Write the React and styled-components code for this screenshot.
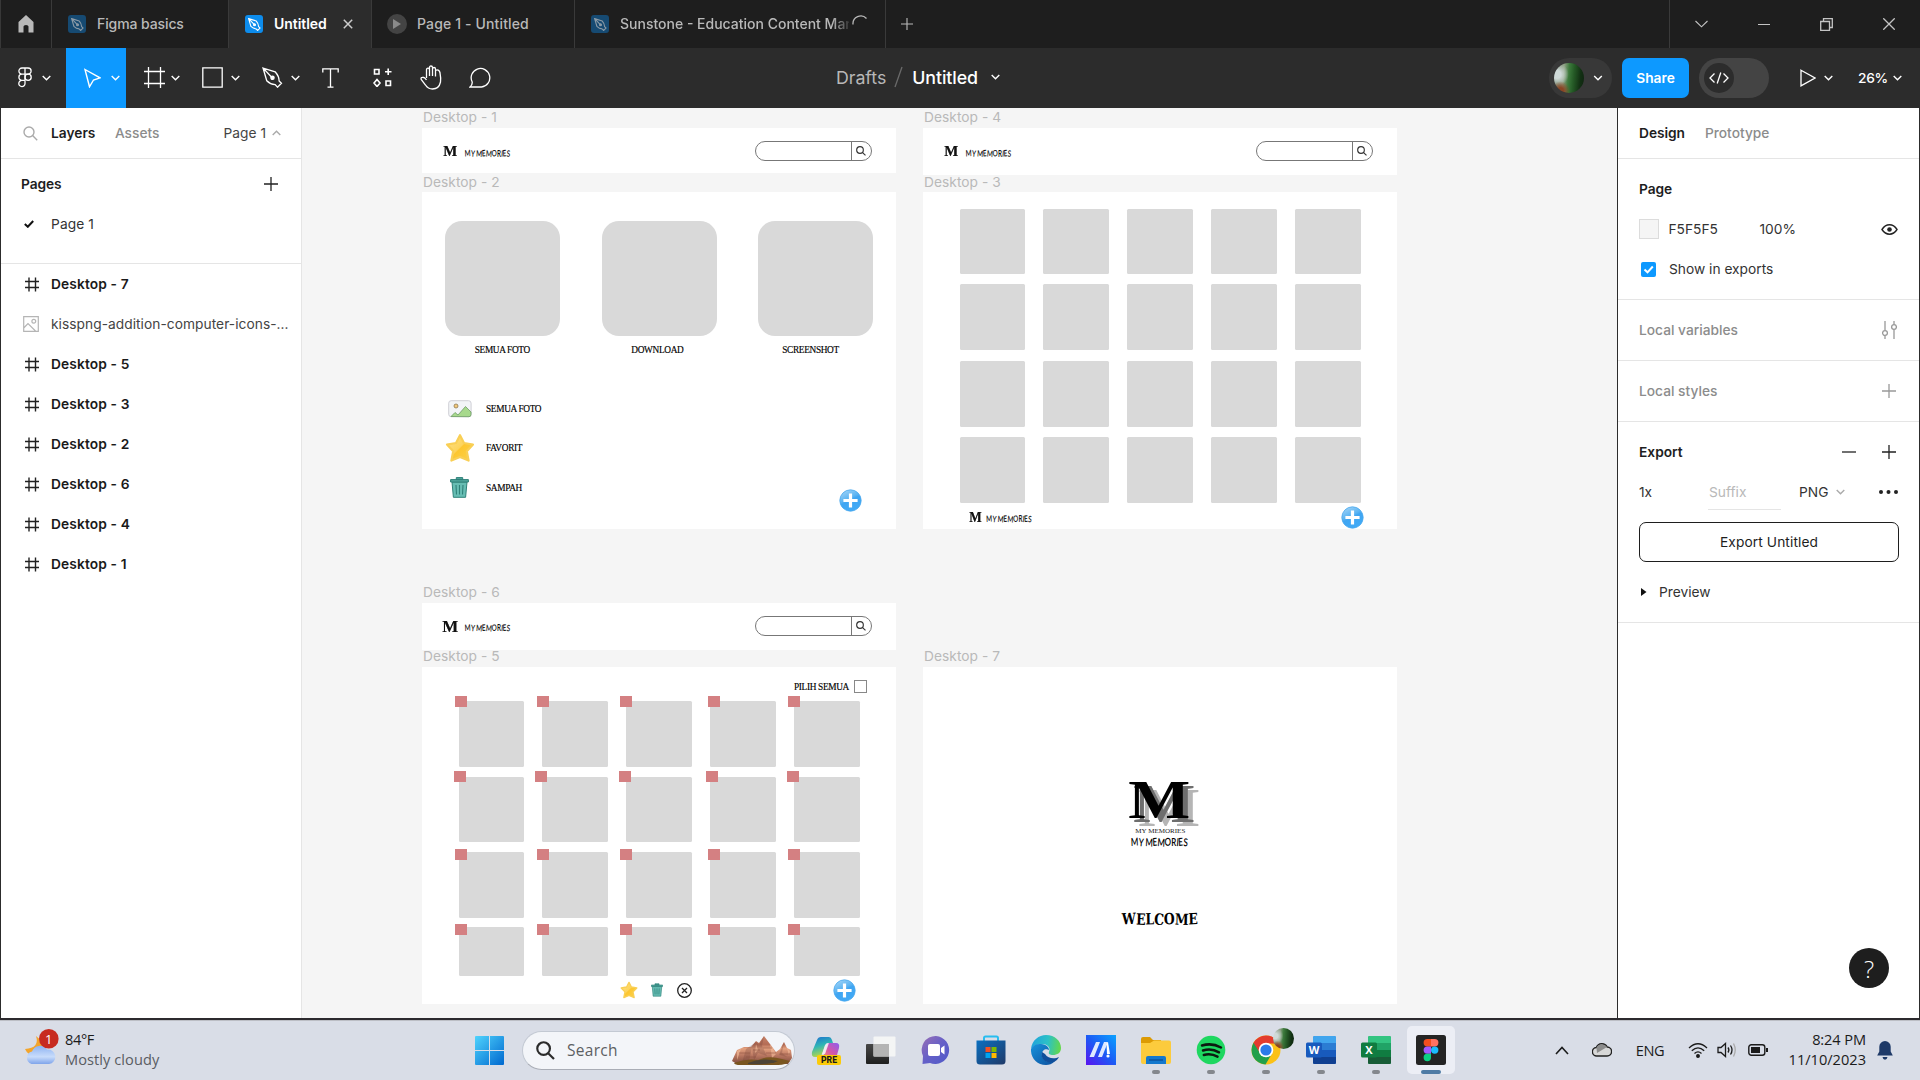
import React from "react";
import styled, { createGlobalStyle, css } from "styled-components";

const UI = `Inter, "Liberation Sans", sans-serif`;
const SERIF = `"Liberation Serif", serif`;
const SEGOE = `"Open Sans", "Noto Sans", sans-serif`;

const Global = createGlobalStyle`
  * { box-sizing: border-box; }
  html, body { margin: 0; padding: 0; overflow: hidden; }
  svg { display: block; flex: none; }
`;

const Screen = styled.div`
  width: 1920px;
  height: 1080px;
  display: flex;
  flex-direction: column;
  overflow: hidden;
  background: #f5f5f5;
  font-family: ${UI};
  font-size: 13.75px;
  color: #1e1e1e;
  white-space: nowrap;
`;

/* ---------- title bar ---------- */
const TitleBar = styled.header`
  display: flex;
  height: 48px;
  background: #1e1e1e;
  border-left: 1px solid #383838;
`;
const HomeTab = styled.div`
  width: 51px;
  display: flex;
  align-items: center;
  padding-left: 17px;
  border-right: 1px solid #3a3a3a;
`;
const Tab = styled.div`
  width: ${(p) => p.$w}px;
  display: flex;
  align-items: center;
  padding-left: 16px;
  gap: 11px;
  border-right: 1px solid #3a3a3a;
  background: ${(p) => (p.$active ? "#2c2c2c" : "transparent")};
  color: ${(p) => (p.$active ? "#fff" : "#b9b9b9")};
  font-weight: ${(p) => (p.$active ? 600 : 500)};
  font-size: 14px;
  letter-spacing: ${(p) => p.$ls || 0}px;
`;
const TabIcon = styled.div`
  width: 18px;
  height: 18px;
  border-radius: 3px;
  display: flex;
  align-items: center;
  justify-content: center;
  background: ${(p) => (p.$dim ? "#164a72" : "#0d8cec")};
  color: ${(p) => (p.$dim ? "#8b9aa6" : "#fff")};
`;
const PlayDot = styled.div`
  width: 20px;
  height: 20px;
  margin-left: -1px;
  margin-right: -1px;
  border-radius: 50%;
  background: #444;
  display: flex;
  align-items: center;
  justify-content: center;
`;
const TabText = styled.span`
  width: ${(p) => (p.$w ? p.$w + "px" : "auto")};
  padding-bottom: 2px;
  ${(p) =>
    p.$fade &&
    css`
      mask-image: linear-gradient(90deg, #000 212px, transparent 233px);
      margin-right: -8px;
    `}
`;
const NewTab = styled.div`
  width: 42px;
  display: flex;
  align-items: center;
  justify-content: center;
`;
const WindowControls = styled.div`
  margin-left: auto;
  width: 251px;
  border-left: 1px solid #3a3a3a;
  display: grid;
  grid-template-columns: 63px 62px 63px 62px;
  place-items: center;
`;

/* ---------- toolbar ---------- */
const Toolbar = styled.div`
  display: flex;
  height: 60px;
  background: #2c2c2c;
  color: #fff;
`;
const Tools = styled.div`
  display: flex;
  align-items: stretch;
  width: 836px;
`;
const Tool = styled.div`
  width: ${(p) => p.$w}px;
  display: flex;
  align-items: center;
  padding-bottom: 1px;
  padding-left: ${(p) => p.$pl || 0}px;
  gap: ${(p) => p.$gap || 0}px;
  background: ${(p) => (p.$on ? "#0d99ff" : "transparent")};
`;
const Crumbs = styled.div`
  display: flex;
  align-items: center;
  font-size: 17.8px;
  padding-bottom: 2px;
`;
const CrumbDim = styled.span`
  color: #b8b8b8;
  letter-spacing: -0.05px;
`;
const Crumb = styled.span`
  font-weight: 500;
  letter-spacing: -0.08px;
  margin-right: 13px;
`;
const ToolbarRight = styled.div`
  margin-left: auto;
  display: flex;
  align-items: center;
  padding-right: 18px;
`;
const AvatarPill = styled.div`
  width: 63px;
  height: 40px;
  border-radius: 20px;
  background: #383838;
  display: flex;
  align-items: center;
  padding-left: 5px;
  gap: 9px;
  margin-right: 10px;
`;
const Avatar = styled.div`
  width: ${(p) => p.$s || 30}px;
  height: ${(p) => p.$s || 30}px;
  border-radius: 50%;
  background: radial-gradient(circle at 22% 92%, #8a4524 0 8%, transparent 26%),
    radial-gradient(circle at 10% 38%, #cfdad8 0 12%, transparent 36%),
    linear-gradient(95deg, #6d7f6c 0%, #8ea184 32%, #3c7a3c 48%, #255a26 64%, #123013 85%, #0f2410 100%);
`;
const ShareButton = styled.button`
  width: 67px;
  height: 40px;
  border: 0;
  border-radius: 7px;
  background: #0d99ff;
  color: #fff;
  font: 600 13.75px ${UI};
  padding: 0;
  margin-right: 10px;
`;
const DevToggle = styled.div`
  width: 70px;
  height: 40px;
  border-radius: 20px;
  background: #444;
  padding: 5px;
  margin-right: 31px;
`;
const DevKnob = styled.div`
  width: 30px;
  height: 30px;
  border-radius: 50%;
  background: #2c2c2c;
  display: flex;
  align-items: center;
  justify-content: center;
`;
const PlayIcon = styled.div`
  margin-right: 8px;
`;
const Zoom = styled.span`
  width: 29px;
  font-size: 13.75px;
  font-weight: 500;
  margin: 0 6px 0 25px;
  letter-spacing: -0.3px;
`;

/* ---------- work area ---------- */
const Work = styled.main`
  display: flex;
  height: 912px;
  border-left: 1px solid #2c2c2c;
  border-right: 1px solid #2c2c2c;
  border-bottom: 2px solid #2c2a2e;
`;
const LeftPanel = styled.aside`
  width: 301px;
  background: #fff;
  border-right: 1px solid #e5e5e5;
`;
const PanelTabs = styled.div`
  height: 51px;
  display: flex;
  align-items: center;
  border-bottom: 1px solid #e5e5e5;
  padding: 0 20px 0 22px;
`;
const Strong = styled.span`
  font-weight: 600;
  letter-spacing: ${(p) => p.$ls || 0}px;
  margin-left: ${(p) => p.$ml || 0}px;
`;
const Muted = styled.span`
  color: #8c8c8c;
  font-weight: ${(p) => p.$weight || 400};
  letter-spacing: ${(p) => p.$ls || 0}px;
  margin-left: ${(p) => p.$ml || 0}px;
`;
const PageSwitch = styled.div`
  margin-left: auto;
  display: flex;
  align-items: center;
  gap: 6px;
  color: #444;
`;
const PagesBlock = styled.section`
  height: 105px;
  padding: 5px 20px 0 20px;
  border-bottom: 1px solid #e5e5e5;
`;
const PagesHead = styled.div`
  height: 40px;
  display: flex;
  align-items: center;
  justify-content: space-between;
`;
const Row = styled.div`
  height: 40px;
  display: grid;
  grid-template-columns: 30px 1fr;
  align-items: center;
`;
const CheckSlot = styled.div`
  padding-left: 3px;
`;
const LayerRow = styled(Row)`
  padding-left: 20px;
  font-weight: ${(p) => (p.$light ? 400 : 600)};
  color: ${(p) => (p.$light ? "#444" : "#1a1a1a")};
  letter-spacing: ${(p) => (p.$light ? 0.04 : 0.12)}px;
`;

const Canvas = styled.section`
  position: relative;
  flex: 1;
  background: #f5f5f5;
  overflow: hidden;
`;

const RightPanel = styled.aside`
  width: 302px;
  background: #fff;
  border-left: 1px solid #2c2c2c;
  position: relative;
`;
const DesignTabs = styled(PanelTabs)`
  padding: 0 20px 0 21px;
  gap: 20px;
`;
const Section = styled.section`
  height: ${(p) => p.$h}px;
  border-bottom: 1px solid #e5e5e5;
  padding: ${(p) => p.$pt || 0}px 20px 0 21px;
`;
const Line = styled.div`
  height: ${(p) => p.$h || 40}px;
  display: flex;
  align-items: center;
`;
const Push = styled.div`
  margin-left: auto;
  display: flex;
  align-items: center;
  gap: ${(p) => p.$gap || 0}px;
  margin-right: ${(p) => p.$mr || 0}px;
`;
const Swatch = styled.div`
  width: 20px;
  height: 20px;
  background: #f5f5f5;
  border: 1px solid #dcdcdc;
  margin-right: 9.5px;
`;
const Value = styled.span`
  color: #333;
  width: ${(p) => (p.$w ? p.$w + "px" : "auto")};
  letter-spacing: ${(p) => p.$ls || 0}px;
`;
const Check = styled.div`
  width: 15px;
  height: 15px;
  border-radius: 2px;
  background: #0d99ff;
  margin: 0 13px 0 2px;
`;
const Suffix = styled.div`
  width: 73px;
  height: 35px;
  line-height: 34px;
  border-bottom: 1px solid #e5e5e5;
  color: #b9b9b9;
  padding-left: 1px;
  margin-right: 18px;
`;
const ExportButton = styled.button`
  display: block;
  width: 260px;
  height: 40px;
  margin-top: 10px;
  border: 1px solid #1e1e1e;
  border-radius: 7px;
  background: #fff;
  color: #1e1e1e;
  font: 400 13.75px ${UI};
  letter-spacing: 0.1px;
`;
const Help = styled.div`
  position: absolute;
  right: 30px;
  bottom: 30px;
  width: 40px;
  height: 40px;
  border-radius: 50%;
  background: #1e1e1e;
  color: #fff;
  display: flex;
  align-items: center;
  justify-content: center;
  font: 300 24px "Open Sans", sans-serif;
`;

/* ---------- canvas frames ---------- */
const FrameNode = styled.div`
  position: absolute;
  left: ${(p) => p.$x - 302}px;
  top: ${(p) => p.$y - 108}px;
  width: 474px;
  height: ${(p) => p.$h}px;
  background: #fff;
`;
const FrameLabel = styled.div`
  position: absolute;
  left: 1px;
  top: ${(p) => p.$top || -21}px;
  line-height: 20px;
  font-size: 13.75px;
  letter-spacing: 0.04px;
  color: #b9b9b9;
`;
const HeaderBar = styled.div`
  display: flex;
  align-items: flex-start;
  justify-content: space-between;
  padding: 13px 23.6px 0 20px;
`;
const SearchPill = styled.div`
  width: 117px;
  height: 20px;
  border: 1px solid #777;
  border-radius: 10px;
  display: flex;
  justify-content: flex-end;
`;
const SearchCell = styled.div`
  width: 20px;
  border-left: 1px solid #777;
  display: flex;
  align-items: center;
  padding-left: 4px;
`;
const Albums = styled.div`
  display: grid;
  grid-template-columns: repeat(3, 115.2px);
  column-gap: 41.4px;
  padding: 29px 0 0 23px;
`;
const Album = styled.div`
  display: flex;
  flex-direction: column;
`;
const AlbumBox = styled.div`
  height: 115px;
  border-radius: 17px;
  background: #d9d9d9;
`;
const Caption = styled.span`
  font: 500 9.3px/12px ${SERIF};
  letter-spacing: -0.32px;
  color: #000;
  -webkit-text-stroke: 0.15px #000;
`;
const AlbumCaption = styled(Caption)`
  margin: 8px 0 0 ${(p) => p.$ml}px;
`;
const MenuList = styled.div`
  margin: 34.5px 0 0 22.6px;
  display: grid;
  grid-template-rows: 37px 40px 40px;
`;
const MenuItem = styled.div`
  display: grid;
  grid-template-columns: 41.4px auto;
  align-items: center;
`;
const IconSlot = styled.div`
  width: 30px;
  display: flex;
  justify-content: center;
`;
const PlusBadge = styled.div`
  position: absolute;
  left: ${(p) => p.$x}px;
  top: ${(p) => p.$y}px;
`;
const PhotoGrid = styled.div`
  display: grid;
  grid-template-columns: repeat(5, 65.8px);
  grid-template-rows: ${(p) => p.$rows};
  column-gap: 18.1px;
  padding: ${(p) => p.$pt}px 0 0 36.6px;
`;
const Photo = styled.div`
  background: #d9d9d9;
  border-radius: 1.5px;
  position: relative;
  height: ${(p) => p.$h}px;
`;
const Marker = styled.div`
  position: absolute;
  left: ${(p) => p.$x}px;
  top: ${(p) => p.$y}px;
  width: 12px;
  height: 11px;
  background: #d48082;
`;
const FooterBrand = styled.div`
  padding: 4px 0 0 45.5px;
`;
const SelectAll = styled.div`
  display: flex;
  align-items: flex-start;
  justify-content: flex-end;
  gap: 5px;
  padding: 13px 29px 0 0;
  height: 34px;
`;
const SelectLabel = styled(Caption)`
  padding-top: 1px;
`;
const SelectBox = styled.div`
  width: 13px;
  height: 13px;
  border: 1px solid #888;
`;
const Actions = styled.div`
  display: flex;
  align-items: center;
  padding-left: 198px;
  gap: 13.3px;
  height: 28px;
`;
const Splash = styled.div`
  padding: 113px 0 0 197px;
`;
const SplashTitle = styled.div`
  padding-top: 61px;
`;

/* ---------- taskbar ---------- */
const Taskbar = styled.footer`
  height: 60px;
  background: #d9dde7;
  border-top: 1px solid #bcbec5;
  display: flex;
  align-items: stretch;
  font-family: ${SEGOE};
`;
const Weather = styled.div`
  width: 475px;
  display: flex;
  padding: 8px 0 0 24px;
  gap: 6px;
`;
const WeatherText = styled.div`
  display: flex;
  flex-direction: column;
  font-size: 14.6px;
  line-height: 20px;
  color: #5a5c62;
  letter-spacing: 0.06px;
`;
const Temp = styled.span`
  color: #1b1b1b;
  letter-spacing: -0.4px;
`;
const StartButton = styled.div`
  width: 47px;
  padding-top: 15px;
`;
const TaskSearch = styled.div`
  width: 273px;
  height: 39px;
  margin-top: 9.5px;
  border-radius: 20px;
  background: #f3f5f9;
  border: 1px solid #c3c9d3;
  border-bottom-color: #a9adb6;
  display: flex;
  align-items: center;
  padding: 0 2px 0 13px;
  font-size: 15.5px;
  color: #5d5f63;
  letter-spacing: 0.3px;
`;
const SearchLabel = styled.span`
  margin-left: 12px;
  margin-right: auto;
`;
const Apps = styled.div`
  display: flex;
  margin-left: 3px;
`;
const AppSlot = styled.div`
  width: 55px;
  display: flex;
  flex-direction: column;
  align-items: center;
  padding-top: 14px;
  position: relative;
`;
const ActiveTile = styled.div`
  width: 48px;
  height: 48px;
  margin-top: -9px;
  border-radius: 5px;
  background: #eceef5;
  display: flex;
  flex-direction: column;
  align-items: center;
  padding-top: 9px;
`;
const RunDot = styled.div`
  width: ${(p) => (p.$active ? 20 : 8)}px;
  height: 4px;
  border-radius: 2px;
  background: ${(p) => (p.$active ? "#4f7ba5" : "#84878d")};
  margin-top: 5px;
`;
const ChromeAvatar = styled.div`
  position: absolute;
  top: 7px;
  right: -1px;
`;
const Tray = styled.div`
  margin-left: auto;
  display: flex;
  align-items: center;
  padding-right: 27px;
  font-size: 14.6px;
  color: #1b1b1b;
`;
const TrayItem = styled.div`
  margin-right: ${(p) => p.$mr}px;
  margin-top: ${(p) => p.$mt || 0}px;
  letter-spacing: ${(p) => p.$ls || 0}px;
`;
const Clock = styled.div`
  display: flex;
  flex-direction: column;
  align-items: flex-end;
  line-height: 20px;
  margin: -4px 11px 0 0;
`;
const ClockLine = styled.span`
  letter-spacing: ${(p) => p.$ls}px;
`;

/* ---------- icons ---------- */
const Svg = ({ w = 20, h, vb, sw = 1.3, c = "currentColor", children }) => (
  <svg width={w} height={h || w} viewBox={vb || `0 0 ${w} ${h || w}`} fill="none" stroke={c} strokeWidth={sw}>
    {children}
  </svg>
);
const Chevron = ({ c = "#fff", w = 9, up }) => (
  <Svg w={w} h={6} vb="0 0 9 6" c={c} sw={1.4}>
    <path d={up ? "M.7 5 4.5 1.2 8.3 5" : "M.7 1 4.5 4.8 8.3 1"} />
  </Svg>
);
const PenNib = ({ s = 20, sw = 1.3, c = "#fff" }) => (
  <Svg w={s} vb="0 0 20 20" sw={sw} c={c}>
    <path d="M1 1 L12.5 4.5 C15.2 7.5 16.3 10.5 16.3 13.2 L18.5 15.5 L14.8 19.2 L12.5 16.8 C9.2 16.6 7 15.5 4.5 13 Z M1.3 1.3 L9 9.5" />
    <circle cx="10" cy="10.3" r="1.5" fill={c} />
  </Svg>
);
const Hash = () => (
  <Svg w={15} sw={1.4} c="#222">
    <path d="M4.5 .5V14.5M11 .5V14.5M.5 4.5H14.5M.5 10.5H14.5" />
  </Svg>
);
const Plus = ({ c = "#222", w = 14 }) => (
  <Svg w={w} vb="0 0 14 14" sw={1.3} c={c}>
    <path d="M7 0V14M0 7H14" />
  </Svg>
);
const Lens = ({ w = 15, c = "#aaa", sw = 1.4 }) => (
  <Svg w={w} vb="0 0 15 15" c={c} sw={sw}>
    <circle cx="6" cy="6" r="5" />
    <path d="M9.6 9.6 14.2 14.2" />
  </Svg>
);
const Star = ({ w = 30, id }) => (
  <svg width={w} height={w} viewBox="0 0 30 30">
    <defs>
      <linearGradient id={id} x1="0" y1="0" x2="1" y2="1">
        <stop offset="0" stopColor="#ffe08a" />
        <stop offset=".48" stopColor="#fdd45c" />
        <stop offset=".52" stopColor="#fdc62f" />
        <stop offset="1" stopColor="#fbd24e" />
      </linearGradient>
    </defs>
    <path
      d="M15 2.2 L19 10 L28 11.6 L21.8 18.2 L23.6 27.6 L15 24 L6.4 27.6 L8.2 18.2 L2 11.6 L11 10 Z"
      fill={`url(#${id})`}
      stroke="#f9cf55"
      strokeWidth="2.2"
      strokeLinejoin="round"
    />
  </svg>
);
const Trash = ({ w = 19, h = 21 }) => (
  <svg width={w} height={h} viewBox="0 0 19 21" fill="#66bdb3" stroke="#2f8179">
    <path d="M2 5H17L15.6 20.3H3.4Z" />
    <path d="M.6 2.6H18.4V5H.6ZM6.3.6H12.7V2.6H6.3Z" fill="#4fa69c" />
    <path d="M6 8 6.5 17.5M9.5 8V17.5M13 8 12.5 17.5" fill="none" strokeWidth="1.1" />
  </svg>
);
const Picture = () => (
  <svg width="24" height="18" viewBox="0 0 24 18">
    <rect x=".7" y=".7" width="22.4" height="16" rx="2.5" fill="#f2f4f7" stroke="#cfcfd6" />
    <circle cx="8" cy="6" r="2" fill="#f4c87a" stroke="#8b7a52" strokeWidth=".8" />
    <path d="M3 16.5 7 12.5 10 15 17.5 6.5 23 12V14.5Q23 16.7 21 16.7Z" fill="#a7d98c" stroke="#6d9a66" strokeWidth=".8" />
  </svg>
);
const BluePlus = ({ id }) => (
  <svg width="23" height="23" viewBox="0 0 23 23">
    <defs>
      <linearGradient id={id} x1=".1" y1="0" x2=".6" y2="1">
        <stop offset="0" stopColor="#a5d6f8" />
        <stop offset=".45" stopColor="#5cb4f2" />
        <stop offset=".55" stopColor="#3fa5f2" />
        <stop offset="1" stopColor="#41aaf6" />
      </linearGradient>
    </defs>
    <circle cx="11.5" cy="11.5" r="10.7" fill={`url(#${id})`} stroke="#4ba9ee" strokeWidth=".8" />
    <path d="M11.5 4.4V18.6M4.4 11.5H18.6" stroke="#fff" strokeWidth="3.2" />
  </svg>
);

/* ---------- brand logo ---------- */
const Fit = ({ w, size, font, weight = 400, fill = "#111", children, ...rest }) => (
  <text textLength={w} lengthAdjust="spacingAndGlyphs" fontSize={size} fontWeight={weight} fontFamily={font} fill={fill} {...rest}>
    {children}
  </text>
);
const ShadowedMark = styled.g`
  filter: drop-shadow(${(p) => p.$dx}px ${(p) => p.$dy}px 0 ${(p) => p.$near})
    drop-shadow(${(p) => p.$dx}px ${(p) => p.$dy}px 0 ${(p) => p.$far});
`;
const BrandM = (p) => (
  <Fit font="Liberation Serif, serif" weight={700} {...p}>M</Fit>
);
const HandText = (p) => (
  <Fit font="Lato, 'Open Sans', sans-serif" weight={600} rotate="-3 5 0 4 -4 5 -3 0 6 -4 5" {...p}>MY MEMORIES</Fit>
);

const BrandLogo = ({ mx = 1.3, mw = 14, ms = 15.5, my = 15.2, tx = 22.7, ty = 15.5 }) => (
  <svg width="100" height="20" viewBox="0 0 100 20">
    <ShadowedMark $dx={0.9} $dy={0.7} $near="#888" $far="#ccc">
      <BrandM x={mx} y={my} w={mw} size={ms} />
    </ShadowedMark>
    <HandText x={tx} y={ty} w={45.3} size={8.8} />
  </svg>
);

const SplashLogo = () => (
  <svg width="120" height="70" viewBox="0 0 120 70">
    <ShadowedMark $dx={5.5} $dy={4} $near="#6e6e6e" $far="#b5b5b5">
      <BrandM x={8.3} y={38} w={62} size={55} fill="#000" />
    </ShadowedMark>
    <Fit x={15.3} y={53.2} w={50} size={5.6} font="Liberation Serif, serif" fill="#222">MY MEMORIES</Fit>
    <HandText x={11} y={66} w={56.5} size={11} fill="#000" />
  </svg>
);

/* ---------- canvas content ---------- */
function HeaderFrame({ name, x, y, h, logo }) {
  return (
    <FrameNode $x={x} $y={y} $h={h}>
      <FrameLabel>{name}</FrameLabel>
      <HeaderBar>
        <BrandLogo {...logo} />
        <SearchPill>
          <SearchCell>
            <Lens w={10} c="#333" sw={1.7} />
          </SearchCell>
        </SearchPill>
      </HeaderBar>
    </FrameNode>
  );
}

const albums = [
  ["SEMUA FOTO", 29.7],
  ["DOWNLOAD", 29.7],
  ["SCREENSHOT", 24],
];
const cols = [0, 1, 2, 3, 4];
const markerX = [
  [-3.7, -5.6, -6, -2.7, -6],
  [-4.7, -7.3, -7.3, -4.1, -7.3],
];
const markerY = [-5, -5.5, -3, -3];

function CanvasArea() {
  return (
    <Canvas>
      <HeaderFrame name="Desktop - 1" x={422} y={128} h={45} />
      <HeaderFrame name="Desktop - 4" x={923} y={128} h={47} />
      <HeaderFrame name="Desktop - 6" x={422} y={603} h={47} logo={{ mx: 0.2, mw: 16, ms: 17.5, my: 15.5, ty: 15 }} />

      <FrameNode $x={422} $y={192} $h={337}>
        <FrameLabel $top={-20}>Desktop - 2</FrameLabel>
        <Albums>
          {albums.map(([t, ml]) => (
            <Album key={t}>
              <AlbumBox />
              <AlbumCaption $ml={ml}>{t}</AlbumCaption>
            </Album>
          ))}
        </Albums>
        <MenuList>
          <MenuItem>
            <IconSlot><Picture /></IconSlot>
            <Caption>SEMUA FOTO</Caption>
          </MenuItem>
          <MenuItem>
            <IconSlot><Star id="star-menu" /></IconSlot>
            <Caption>FAVORIT</Caption>
          </MenuItem>
          <MenuItem>
            <IconSlot><Trash /></IconSlot>
            <Caption>SAMPAH</Caption>
          </MenuItem>
        </MenuList>
        <PlusBadge $x={417} $y={297}><BluePlus id="plus-a" /></PlusBadge>
      </FrameNode>

      <FrameNode $x={923} $y={192} $h={337}>
        <FrameLabel $top={-20}>Desktop - 3</FrameLabel>
        <PhotoGrid $pt={16.7} $rows="75.3px 77px 76.3px 65.8px">
          {[0, 1, 2, 3].map((r) => cols.map((c) => <Photo key={`${r}-${c}`} $h={65.8} />))}
        </PhotoGrid>
        <FooterBrand>
          <BrandLogo mx={0.2} mw={12.5} ms={14} my={14.5} tx={17.2} ty={15} />
        </FooterBrand>
        <PlusBadge $x={417.5} $y={314}><BluePlus id="plus-b" /></PlusBadge>
      </FrameNode>

      <FrameNode $x={422} $y={667} $h={337}>
        <FrameLabel>Desktop - 5</FrameLabel>
        <SelectAll>
          <SelectLabel>PILIH SEMUA</SelectLabel>
          <SelectBox />
        </SelectAll>
        <PhotoGrid $pt={0} $rows="75.5px 75.3px 75.3px 49.4px">
          {[0, 1, 2, 3].map((r) =>
            cols.map((c) => (
              <Photo key={`${r}-${c}`} $h={r === 3 ? 49.4 : 65.8}>
                <Marker $x={markerX[r === 1 ? 1 : 0][c]} $y={markerY[r]} />
              </Photo>
            ))
          )}
        </PhotoGrid>
        <Actions>
          <Star id="star-action" w={18} />
          <Trash w={12} h={14} />
          <Svg w={15} c="#222" sw={1.3}>
            <circle cx="7.5" cy="7.5" r="6.8" />
            <path d="M5 5 10 10M10 5 5 10" />
          </Svg>
        </Actions>
        <PlusBadge $x={411} $y={312}><BluePlus id="plus-c" /></PlusBadge>
      </FrameNode>

      <FrameNode $x={923} $y={667} $h={337}>
        <FrameLabel>Desktop - 7</FrameLabel>
        <Splash>
          <SplashLogo />
          <SplashTitle>
            <svg width="130" height="20" viewBox="0 0 130 20">
              <Fit x={2} y={13.5} w={76} size={15.5} font="DejaVu Serif, serif" weight={700} fill="#000" rotate="-2 2 -1 3 -2 2 -2">WELCOME</Fit>
            </svg>
          </SplashTitle>
        </Splash>
      </FrameNode>
    </Canvas>
  );
}

/* ---------- taskbar app icons ---------- */
const Windows = () => (
  <svg width="29" height="29" viewBox="0 0 29 29">
    <defs>
      <linearGradient id="win" x1="0" y1="0" x2="1" y2="1">
        <stop offset="0" stopColor="#4fd3fd" />
        <stop offset="1" stopColor="#0068cf" />
      </linearGradient>
    </defs>
    <path d="M0 1Q0 0 1 0H14V14H0ZM15 0H28Q29 0 29 1V14H15ZM0 15H14V29H1Q0 29 0 28ZM15 15H29V28Q29 29 28 29H15Z" fill="url(#win)" />
  </svg>
);
const Mountain = () => (
  <svg width="60" height="29" viewBox="0 0 60 29">
    <defs>
      <linearGradient id="rock" x1="0" y1="0" x2="0" y2="1">
        <stop offset="0" stopColor="#c98468" />
        <stop offset=".3" stopColor="#b46c55" />
        <stop offset=".45" stopColor="#e3a07e" />
        <stop offset=".7" stopColor="#b87660" />
        <stop offset="1" stopColor="#7d4b3c" />
      </linearGradient>
    </defs>
    <path d="M0 25 5 14 12 11 19 11 24 5 27 7 32 0 38 8 44 16 48 13 52 6 55 12 59 14 60 22 56 28 5 28Z" fill="url(#rock)" />
    <path d="M32 0 30 10 35 20 26 17 22 24 20 12 17 25 10 27 14 13 24 6 27 9ZM52 6 50 17 55 21 47 19Z" fill="#6f4038" opacity=".28" />
    <path d="M38 8 44 18 40 22ZM5 15 9 13 5 24ZM24 8 26 14 23 17ZM55 12 58 15 57 20Z" fill="#f0b696" opacity=".7" />
    <path d="M7 17H18M21 14H28M31 12H40M14 21H24M34 17H44M48 18H58" stroke="#8d5140" strokeWidth=".8" opacity=".7" />
    <path d="M2 27Q14 22 26 24 36 19 50 23L58 25Q54 29 46 29H8Q3 29 2 27Z" fill="#7a5620" />
    <path d="M16 27Q30 21 46 25 38 29 16 28Z" fill="#4d4436" />
  </svg>
);
const Copilot = () => (
  <svg width="30" height="30" viewBox="0 0 30 30">
    <defs>
      <linearGradient id="cpa" x1="0" y1="0" x2=".3" y2="1">
        <stop offset="0" stopColor="#1c6fd0" />
        <stop offset=".5" stopColor="#2fb5b5" />
        <stop offset="1" stopColor="#b5d84a" />
      </linearGradient>
      <linearGradient id="cpb" x1="1" y1="0" x2="0" y2="1">
        <stop offset="0" stopColor="#8d5cf0" />
        <stop offset=".5" stopColor="#d457a8" />
        <stop offset="1" stopColor="#ff9a5c" />
      </linearGradient>
    </defs>
    <path d="M6 5Q7 2 10 2H18Q20 2 21 5L22 8H17Q15 8 14 11L11 19Q10 22 7 22H4Q0 22 1 17Z" fill="url(#cpa)" />
    <path d="M17 8H25Q29 8 28 13L26 20Q25 24 21 24H10L14 18Z" fill="url(#cpb)" />
    <path d="M14 10Q15 8 18 8L14 19H11Z" fill="#f5eef5" opacity=".85" />
    <rect x="6" y="20" width="24" height="10" rx="2" fill="#fccb08" />
    <text x="18" y="28.3" textAnchor="middle" fontFamily="Roboto, sans-serif" fontWeight="800" fontSize="8.6" fill="#1b1b1b">PRE</text>
  </svg>
);
const TaskView = () => (
  <svg width="30" height="30" viewBox="0 0 30 30">
    <defs>
      <linearGradient id="tv" x1="0" y1="0" x2="0" y2="1">
        <stop offset="0" stopColor="#474747" />
        <stop offset="1" stopColor="#1f1f1f" />
      </linearGradient>
    </defs>
    <rect x="0" y="9" width="23" height="20" rx="1" fill="url(#tv)" />
    <rect x="7.5" y="1.5" width="22" height="20" rx="1" fill="#f6f6f6" opacity=".95" />
    <rect x="7.5" y="9" width="15.5" height="12.5" fill="#b4b4b4" />
  </svg>
);
const Chat = () => (
  <svg width="30" height="30" viewBox="0 0 30 30">
    <defs>
      <linearGradient id="chat" x1="0" y1="0" x2="1" y2="1">
        <stop offset="0" stopColor="#9a6fb5" />
        <stop offset=".5" stopColor="#6560c8" />
        <stop offset="1" stopColor="#4f59c8" />
      </linearGradient>
    </defs>
    <path d="M15 1A14 14 0 1 1 9 28L1.5 29 2 21A14 14 0 0 1 15 1Z" fill="url(#chat)" />
    <rect x="7" y="9" width="12" height="12" rx="2" fill="#fff" />
    <path d="M20 13 23.5 10.5V19.5L20 17Z" fill="#fff" />
  </svg>
);
const Store = () => (
  <svg width="30" height="30" viewBox="0 0 30 30">
    <defs>
      <linearGradient id="store" x1="0" y1="0" x2="1" y2="1">
        <stop offset="0" stopColor="#0a6fc0" />
        <stop offset="1" stopColor="#203a69" />
      </linearGradient>
    </defs>
    <path d="M8 6V3Q8 1.5 9.5 1.5H20.5Q22 1.5 22 3V6" fill="none" stroke="#29bdf0" strokeWidth="2" />
    <path d="M.5 5.5H29.5V26Q29.5 29.5 26 29.5H4Q.5 29.5 .5 26Z" fill="url(#store)" />
    <path d="M9.5 12H14.5V17H9.5Z" fill="#f25022" />
    <path d="M15.5 12H20.5V17H15.5Z" fill="#7fba00" />
    <path d="M9.5 18H14.5V23H9.5Z" fill="#00a4ef" />
    <path d="M15.5 18H20.5V23H15.5Z" fill="#ffb900" />
  </svg>
);
const Edge = () => (
  <svg width="30" height="30" viewBox="0 0 30 30">
    <defs>
      <linearGradient id="ed1" x1="0" y1=".4" x2="1" y2=".5">
        <stop offset="0" stopColor="#1fa2dc" />
        <stop offset=".55" stopColor="#2cc1c6" />
        <stop offset="1" stopColor="#63d84a" />
      </linearGradient>
      <linearGradient id="ed2" x1="0" y1="0" x2="1" y2="1">
        <stop offset="0" stopColor="#1793dc" />
        <stop offset="1" stopColor="#0d4f9e" />
      </linearGradient>
    </defs>
    <path d="M0 14C1 5 8 0 15 0 24 0 30 6 30 13 30 18 26 20 22 20 19 20 17 19 18 17 20 12 16 9 11 9 6 9 2 11 0 14Z" fill="url(#ed1)" />
    <path d="M0 14C2 10 6 8.5 10 9 15 9.5 18 12 18 15 14 13 10 16 11 21 12 26 18 28 24 26 21 29 18 30 15 30 6 30-.5 23 0 14Z" fill="url(#ed2)" />
    <path d="M11 17C9 23 14 29 23 27 25 26 27 24 28 22 24 24 17 24 14 19Z" fill="#104f9b" />
  </svg>
);
const MyAsus = () => (
  <svg width="30" height="30" viewBox="0 0 30 30">
    <defs>
      <linearGradient id="asus" x1="1" y1="0" x2="0" y2="1">
        <stop offset="0" stopColor="#0aa2ff" />
        <stop offset=".5" stopColor="#1c5bf5" />
        <stop offset="1" stopColor="#5a12f0" />
      </linearGradient>
    </defs>
    <rect width="30" height="30" fill="url(#asus)" />
    <path d="M10 7H14L8 22H3.5ZM18 7H22L16 22H12Z" fill="#dfe9ff" />
    <path d="M20.5 9 22 7 24 19H21Z" fill="#fff" />
    <circle cx="22" cy="21" r="1.6" fill="#fff" />
  </svg>
);
const Folder = () => (
  <svg width="30" height="30" viewBox="0 0 30 30">
    <path d="M0 4Q0 2 2 2H9L12 5H20V12H0Z" fill="#dc9a04" />
    <path d="M0 8H9L13 5.5H28Q30 5.5 30 7.5V27Q30 29 28 29H2Q0 29 0 27Z" fill="#fccb3d" />
    <path d="M5 23Q5 21 7 21H23Q25 21 25 23V29H5Z" fill="#1478cd" />
    <path d="M8 25H22" stroke="#0b4e96" strokeWidth="1.3" />
  </svg>
);
const Spotify = () => (
  <svg width="30" height="30" viewBox="0 0 30 30">
    <circle cx="15" cy="15" r="14.3" fill="#1ed760" />
    <path d="M6 10.5Q16 7.5 25 12.5M7 15.5Q15.5 13 23 17.3M7.8 20Q15 18 21.5 21.7" fill="none" stroke="#0c1a10" strokeWidth="2.5" strokeLinecap="round" />
  </svg>
);
const Chrome = () => (
  <svg width="30" height="30" viewBox="0 0 30 30">
    <circle cx="15" cy="15" r="14.5" fill="#fbc116" />
    <path d="M15 15 2.5 7.7A14.5 14.5 0 0 0 14.5 29.5L21 18.5Z" fill="#21a04b" />
    <path d="M2.5 7.7 9 18 15 8.5H28L27.5 7.7A14.5 14.5 0 0 0 2.5 7.7Z" fill="#e33b2e" />
    <circle cx="15" cy="15" r="7.3" fill="#fff" />
    <circle cx="15" cy="15" r="5.6" fill="#2b7be9" />
  </svg>
);
const Office = ({ letter, a, b, c, d, tile }) => (
  <svg width="30" height="30" viewBox="0 0 30 30">
    <rect x="7" y="1" width="23" height="28" rx="1.5" fill={b} />
    <path d="M7 8V2.5Q7 1 8.5 1H28.5Q30 1 30 2.5V8Z" fill={a} />
    <path d="M7 15H30V22H7Z" fill={c} />
    <path d="M7 22H30V27.5Q30 29 28.5 29H8.5Q7 29 7 27.5Z" fill={d} />
    <rect x="0" y="7.5" width="16" height="15" rx="1.5" fill={tile} />
    <text x="8" y="19" textAnchor="middle" fontFamily="Open Sans, sans-serif" fontWeight="700" fontSize="11" fill="#fff">{letter}</text>
  </svg>
);
const FigmaApp = () => (
  <svg width="30" height="30" viewBox="0 0 30 30">
    <rect width="30" height="30" rx="2.5" fill="#242424" />
    <path d="M15 4H11.3A3.7 3.7 0 0 0 11.3 11.4H15Z" fill="#f24e1e" />
    <path d="M15 4H18.7A3.7 3.7 0 0 1 18.7 11.4H15Z" fill="#ff7262" />
    <path d="M15 11.4H11.3A3.7 3.7 0 0 0 11.3 18.8H15Z" fill="#a259ff" />
    <circle cx="18.7" cy="15.1" r="3.7" fill="#1abcfe" />
    <path d="M15 18.8H11.3A3.7 3.7 0 1 0 15 22.5Z" fill="#0acf83" />
  </svg>
);
const WeatherIcon = () => (
  <svg width="35" height="44" viewBox="0 0 35 44">
    <defs>
      <linearGradient id="cld" x1="0" y1="0" x2="0" y2="1">
        <stop offset="0" stopColor="#8eb3f2" />
        <stop offset=".6" stopColor="#c8dcfb" />
        <stop offset="1" stopColor="#7fa4ea" />
      </linearGradient>
    </defs>
    <path d="M12 7Q16 19 1 20 4 27 12 27 22 26 20 14Z" fill="#f3a52c" />
    <path d="M7.5 35A6.5 6.5 0 0 1 8 22.5 8.5 8.5 0 0 1 23 20.500 7.300 7.300 0 0 1 25 35Z" fill="url(#cld)" />
    <circle cx="24.8" cy="9.8" r="9.8" fill="#c72b20" />
    <text x="24.8" y="14.6" textAnchor="middle" fontFamily="Open Sans, sans-serif" fontSize="13" fill="#fff">1</text>
  </svg>
);

const pinned = [
  [<Copilot />, 0],
  [<TaskView />, 0],
  [<Chat />, 0],
  [<Store />, 0],
  [<Edge />, 0],
  [<MyAsus />, 0],
  [<Folder />, 1],
  [<Spotify />, 1],
  [<Chrome />, 1, true],
  [<Office letter="W" a="#41a5ee" b="#2b7cd3" c="#185abd" d="#103f91" tile="#185abd" />, 1],
  [<Office letter="X" a="#33c481" b="#21a366" c="#107c41" d="#185c37" tile="#107c41" />, 1],
];

const layers = ["Desktop - 7", null, "Desktop - 5", "Desktop - 3", "Desktop - 2", "Desktop - 6", "Desktop - 4", "Desktop - 1"];

export default function App() {
  return (
    <Screen>
      <Global />
      <TitleBar>
        <HomeTab>
          <svg width="16" height="18" viewBox="0 0 16 18"><path d="M8 0 15.5 7V17.5H10.5V11.5Q10.5 10 8 10 5.5 10 5.5 11.5V17.5H.5V7Z" fill="#b9b9b9" /></svg>
        </HomeTab>
        <Tab $w={177} $ls={-0.1}>
          <TabIcon $dim><PenNib s={13} sw={1.7} c="#8b9aa6" /></TabIcon>
          <TabText>Figma basics</TabText>
        </Tab>
        <Tab $w={143} $active $ls={-0.05}>
          <TabIcon><PenNib s={13} sw={1.7} /></TabIcon>
          <TabText $w={57.5}>Untitled</TabText>
          <Svg w={10} c="#ccc" sw={1.5}><path d="M.8.8 9.2 9.2M9.2.8.8 9.2" /></Svg>
        </Tab>
        <Tab $w={203} $ls={0.14}>
          <PlayDot><svg width="8" height="10" viewBox="0 0 8 10"><path d="M0 0 8 5 0 10Z" fill="#8a8a8a" /></svg></PlayDot>
          <TabText>Page 1 - Untitled</TabText>
        </Tab>
        <Tab $w={311}>
          <TabIcon $dim><PenNib s={13} sw={1.7} c="#8b9aa6" /></TabIcon>
          <TabText $w={229} $fade>Sunstone - Education Content Man</TabText>
          <Svg w={17} h={20} c="#b9b9b9" sw={1.3}><path d="M1 10.5A7.8 7.8 0 0 1 14.5 4.5" /></Svg>
        </Tab>
        <NewTab><Plus c="#b9b9b9" w={12} /></NewTab>
        <WindowControls>
          <Svg w={13} h={8} c="#c4c4c4" sw={1.1}><path d="M.5 1 6.5 6.8 12.5 1" /></Svg>
          <Svg w={12} h={1} c="#c4c4c4" sw={1}><path d="M0 .5H12" /></Svg>
          <Svg w={13} c="#c4c4c4"><path d="M.7 3.5H9.5V12.3H.7ZM3.5 3V.7H12.3V9.5H10" /></Svg>
          <Svg w={12} c="#c4c4c4"><path d="M.3.3 11.7 11.7M11.7.3.3 11.7" /></Svg>
        </WindowControls>
      </TitleBar>

      <Toolbar>
        <Tools>
          <Tool $w={66} $pl={18} $gap={10}>
            <Svg w={14} h={21} sw={1.3}>
              <path d="M7 1H4A3.1 3.1 0 0 0 4 7.2H7ZM7 1H10A3.1 3.1 0 0 1 10 7.2H7ZM7 7.2H4A3.1 3.1 0 0 0 4 13.4H7ZM7 13.4H4A3.1 3.1 0 1 0 7 16.5Z" />
              <circle cx="10.1" cy="10.3" r="3.1" />
            </Svg>
            <Chevron />
          </Tool>
          <Tool $w={60} $pl={18} $gap={9.5} $on>
            <Svg w={17} h={20} sw={1.4}><path d="M1 1.5 16 9.8 9.5 12 5.5 18.8Z" /></Svg>
            <Chevron />
          </Tool>
          <Tool $w={60} $pl={17.5} $gap={6}>
            <Svg w={21} sw={1.3}><path d="M4.5 0V21M16.5 0V21M0 4.5H21M0 16.5H21" /></Svg>
            <Chevron />
          </Tool>
          <Tool $w={60} $pl={16} $gap={8}>
            <Svg w={21} sw={1.3}><path d="M.8.8H20.2V20.2H.8Z" /></Svg>
            <Chevron />
          </Tool>
          <Tool $w={60} $pl={16} $gap={7.5}>
            <PenNib s={21} />
            <Chevron />
          </Tool>
          <Tool $w={50} $pl={16}>
            <Svg w={17} h={20} sw={1.3}><path d="M.8 4.5V.8H16.2V4.5M8.5.8V19.2M5.5 19.2H11.5" /></Svg>
          </Tool>
          <Tool $w={50} $pl={16.5}>
            <Svg w={19} sw={1.6}>
              <path d="M1.5 1.5H6V6H1.5ZM13 13H17.5V17.5H13ZM15.2 .5V7M12 3.8H18.5M4 11.5 7 15 4 18.5 1 15Z" />
            </Svg>
          </Tool>
          <Tool $w={50} $pl={14}>
            <Svg w={22} h={25} vb="0 0 22 25" sw={1.3}>
              <path d="M6.5 13V5Q6.5 3.2 8 3.2T9.5 5V11M9.5 5V2.5Q9.5 1 11 1T12.5 2.5V11M12.5 3.8Q12.5 2.5 14 2.5T15.5 4V11.5M15.5 6Q15.7 4.8 17.2 4.8 19.5 4.8 20 8 21 13 20.5 17 19 24 12.5 24 8 24 5.5 20L1.2 14.5Q.5 12.5 2.5 12.3 4.5 12 6.5 15" />
            </Svg>
          </Tool>
          <Tool $w={50} $pl={13}>
            <Svg w={23} h={21} sw={1.3}><path d="M1 20Q3.5 18 3.2 15A9.3 9.3 0 1 1 12.5 20Z" /></Svg>
          </Tool>
        </Tools>
        <Crumbs>
          <CrumbDim>Drafts</CrumbDim>
          <Svg w={26} h={22} c="#6a6a6a" sw={1.3}><path d="M9 21 16 1" /></Svg>
          <Crumb>Untitled</Crumb>
          <Chevron />
        </Crumbs>
        <ToolbarRight>
          <AvatarPill><Avatar /><Chevron w={10} /></AvatarPill>
          <ShareButton>Share</ShareButton>
          <DevToggle>
            <DevKnob>
              <Svg w={20} h={12} sw={1.3}><path d="M5.5 1.5 1 6 5.5 10.5M14.5 1.5 19 6 14.5 10.5M11.8.5 8.2 11.5" /></Svg>
            </DevKnob>
          </DevToggle>
          <PlayIcon><Svg w={16} h={18} sw={1.3}><path d="M1 1.2 15 9 1 16.8Z" /></Svg></PlayIcon>
          <Chevron />
          <Zoom>26%</Zoom>
          <Chevron />
        </ToolbarRight>
      </Toolbar>

      <Work>
        <LeftPanel>
          <PanelTabs>
            <Lens />
            <Strong $ml={13}>Layers</Strong>
            <Muted $weight={500} $ml={19.5}>Assets</Muted>
            <PageSwitch>Page 1<Chevron up c="#aaa" /></PageSwitch>
          </PanelTabs>
          <PagesBlock>
            <PagesHead><Strong $ls={-0.1}>Pages</Strong><Push $mr={3}><Plus /></Push></PagesHead>
            <Row>
              <CheckSlot><Svg w={10} h={8} c="#111" sw={2}><path d="M.8 4 3.8 6.8 9.2 1" /></Svg></CheckSlot>
              <Value $ls={0.1}>Page 1</Value>
            </Row>
          </PagesBlock>
          {layers.map((name) =>
            name ? (
              <LayerRow key={name}><Svg w={22} h={15} vb="-3.5 0 22 15" c="none"><Hash /></Svg>{name}</LayerRow>
            ) : (
              <LayerRow key="image" $light>
                <Svg w={20} h={16} vb="-2 0 20 16" c="#b5b5b5" sw={1.2}>
                  <path d="M.7.7H15.3V15.3H.7ZM.7 12 5 7.5 12.5 15" />
                  <circle cx="10.8" cy="5.2" r="1.9" />
                </Svg>
                kisspng-addition-computer-icons-...
              </LayerRow>
            )
          )}
        </LeftPanel>

        <CanvasArea />

        <RightPanel>
          <DesignTabs><Strong $ls={-0.05}>Design</Strong><Muted $weight={500}>Prototype</Muted></DesignTabs>
          <Section $h={141} $pt={10}>
            <Line><Strong $ls={-0.1}>Page</Strong></Line>
            <Line>
              <Swatch />
              <Value $w={91}>F5F5F5</Value>
              <Value>100%</Value>
              <Push $mr={1.5}>
                <Svg w={17} h={11} c="#222" sw={1.4}>
                  <path d="M1 5.5Q4 .8 8.5.8T16 5.5Q13 10.2 8.5 10.2T1 5.5Z" />
                  <circle cx="8.5" cy="5.5" r="2.3" fill="#222" stroke="none" />
                </Svg>
              </Push>
            </Line>
            <Line>
              <Check><Svg w={15} c="#fff" sw={2}><path d="M3.5 7.5 6.5 10.3 11.8 4.5" /></Svg></Check>
              <Value>Show in exports</Value>
            </Line>
          </Section>
          <Section $h={61} $pt={10}>
            <Line>
              <Muted $weight={500}>Local variables</Muted>
              <Push $mr={2}>
                <Svg w={15} h={18} c="#999" sw={1.3}>
                  <path d="M3 0V9.5M3 14.5V18M12 0V3.5M12 8.5V18" />
                  <circle cx="3" cy="12" r="2.4" /><circle cx="12" cy="6" r="2.4" />
                </Svg>
              </Push>
            </Line>
          </Section>
          <Section $h={61} $pt={10}>
            <Line><Muted $weight={500}>Local styles</Muted><Push $mr={3}><Plus c="#999" /></Push></Line>
          </Section>
          <Section $h={201} $pt={10}>
            <Line>
              <Strong>Export</Strong>
              <Push $gap={26} $mr={3}>
                <Svg w={14} h={2} c="#222"><path d="M0 1H14" /></Svg>
                <Plus />
              </Push>
            </Line>
            <Line>
              <Value $w={69}>1x</Value>
              <Suffix>Suffix</Suffix>
              <Value $w={37}>PNG</Value>
              <Chevron c="#aaa" />
              <Push $mr={1}>
                <svg width="19" height="4" viewBox="0 0 19 4" fill="#222"><circle cx="2" cy="2" r="2" /><circle cx="9.5" cy="2" r="2" /><circle cx="17" cy="2" r="2" /></svg>
              </Push>
            </Line>
            <ExportButton>Export Untitled</ExportButton>
            <Line $h={60}>
              <Svg w={20} h={8} c="none"><path d="M2 0 7.5 4 2 8Z" fill="#111" /></Svg>
              <Value>Preview</Value>
            </Line>
          </Section>
          <Help>?</Help>
        </RightPanel>
      </Work>

      <Taskbar>
        <Weather>
          <WeatherIcon />
          <WeatherText><Temp>84°F</Temp><span>Mostly cloudy</span></WeatherText>
        </Weather>
        <StartButton><Windows /></StartButton>
        <TaskSearch>
          <Lens w={19} c="#2b2b2b" sw={1.7} />
          <SearchLabel>Search</SearchLabel>
          <Mountain />
        </TaskSearch>
        <Apps>
          {pinned.map(([icon, run, avatar], i) => (
            <AppSlot key={i}>
              {icon}
              {run ? <RunDot /> : null}
              {avatar ? <ChromeAvatar><Avatar $s={21} /></ChromeAvatar> : null}
            </AppSlot>
          ))}
          <AppSlot>
            <ActiveTile><FigmaApp /><RunDot $active /></ActiveTile>
          </AppSlot>
        </Apps>
        <Tray>
          <TrayItem $mr={23} $mt={-1}><Svg w={14} h={9} c="#1b1b1b" sw={1.6}><path d="M1 8 7 1.5 13 8" /></Svg></TrayItem>
          <TrayItem $mr={23.5} $mt={-2}>
            <svg width="20" height="15" viewBox="0 0 20 15"><path d="M5 14A4.2 4.2 0 0 1 4.3 5.5 6 6 0 0 1 15.2 5 4.5 4.5 0 0 1 15 14Z" fill="#d8d8d8" stroke="#222" strokeWidth="1.4" /><path d="M4.5 5.7A6 6 0 0 1 15 5L5 11Z" fill="#8c8c8c" /></svg>
          </TrayItem>
          <TrayItem $mr={24} $mt={-2} $ls={-0.5}>ENG</TrayItem>
          <TrayItem $mr={9} $mt={-1}>
            <Svg w={20} h={16} c="#1b1b1b" sw={1.3}><path d="M1 6Q10-2.5 19 6M3.8 8.8Q10 3 16.2 8.8M6.5 11.5Q10 8.3 13.5 11.5" /><circle cx="10" cy="14" r="1.3" fill="#1b1b1b" /></Svg>
          </TrayItem>
          <TrayItem $mr={11} $mt={-1}>
            <Svg w={20} h={16} c="#1b1b1b" sw={1.3}><path d="M1 5.5H4L8.5 1.5V14.5L4 10.5H1ZM11 5.5Q12.8 8 11 10.5M13.5 3.5Q16.5 8 13.5 12.5" /><path d="M16.5 1.5Q20 8 16.5 14.5" stroke="#aaa" /></Svg>
          </TrayItem>
          <TrayItem $mr={20.5} $mt={-2}>
            <Svg w={20} h={12} c="#1b1b1b" sw={1.4}><rect x=".8" y=".8" width="16" height="10.4" rx="2.5" /><rect x="3" y="3" width="9" height="6" fill="#1b1b1b" stroke="none" /><path d="M19 4V8" strokeWidth="2" /></Svg>
          </TrayItem>
          <Clock>
            <ClockLine $ls={-0.1}>8:24 PM</ClockLine>
            <ClockLine $ls={0}>11/10/2023</ClockLine>
          </Clock>
          <svg width="16" height="19" viewBox="0 0 16 19" fill="#1f3a68"><path d="M8 0A5.7 5.7 0 0 1 13.7 5.7V10.5L15.8 14.5H.2L2.3 10.5V5.7A5.7 5.7 0 0 1 8 0ZM5.5 16H10.5Q10 18.7 8 18.7T5.5 16Z" /></svg>
        </Tray>
      </Taskbar>
    </Screen>
  );
}
